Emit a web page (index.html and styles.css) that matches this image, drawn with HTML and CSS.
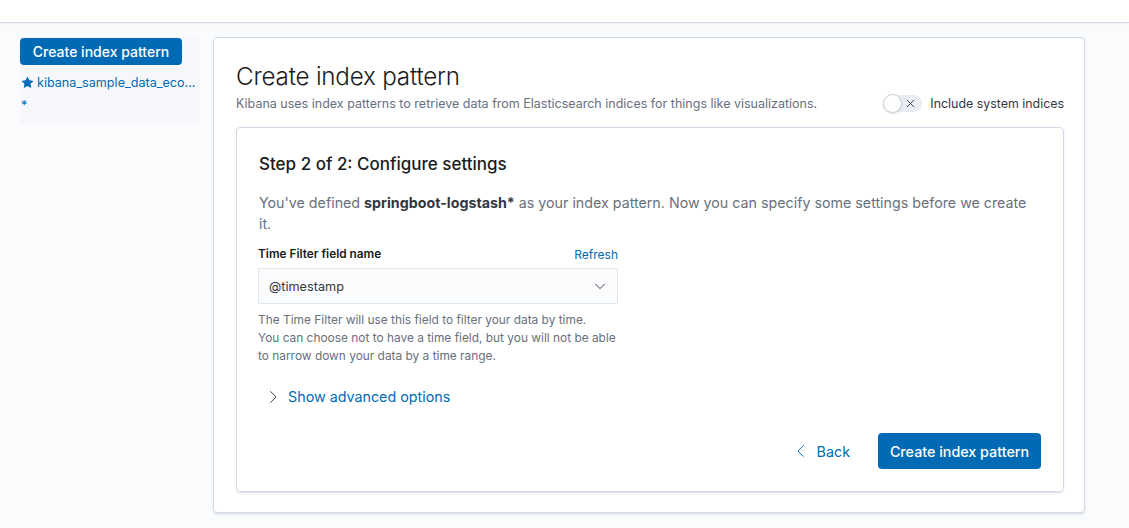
FILE: index.html
```html
<!DOCTYPE html>
<html>
<head>
<meta charset="utf-8">
<link rel="stylesheet" href="styles.css">
</head>
<body>
<header class="topbar"></header>
<div class="layout">
  <aside class="sidebar">
    <button class="btn btn-primary btn-side">Create index pattern</button>
    <ul class="pattern-list">
      <li class="pattern-item">
        <svg class="star" viewBox="0 0 16 16" width="13" height="13"><path d="M8 .6l2.3 4.7 5.1.7-3.7 3.6.9 5.1L8 12.3l-4.6 2.4.9-5.1L.6 6l5.1-.7z" fill="#006bb4"/></svg>
        <span class="pattern-link">kibana_sample_data_eco...</span>
      </li>
      <li class="pattern-item"><span class="pattern-link">*</span></li>
    </ul>
  </aside>
  <main class="panel">
    <div class="page-head">
      <div class="head-text">
        <h1 class="title">Create index pattern</h1>
        <p class="subtitle">Kibana uses index patterns to retrieve data from Elasticsearch indices for things like visualizations.</p>
      </div>
      <label class="switch">
        <span class="switch-track">
          <span class="switch-thumb"></span>
          <svg class="switch-x" viewBox="0 0 16 16" width="11" height="11"><path d="M3 3l10 10M13 3L3 13" stroke="#343741" stroke-width="1.3" fill="none"/></svg>
        </span>
        <span class="switch-label">Include system indices</span>
      </label>
    </div>
    <section class="inner">
      <h2 class="step-title">Step 2 of 2: Configure settings</h2>
      <p class="lead">You've defined <strong>springboot-logstash*</strong> as your index pattern. Now you can specify some settings before we create it.</p>
      <div class="form-row">
        <div class="form-label-row">
          <span class="form-label">Time Filter field name</span>
          <a class="link-small">Refresh</a>
        </div>
        <div class="select">
          <span>@timestamp</span>
          <svg viewBox="0 0 16 16" width="14" height="14"><path d="M2.5 5.5l5.5 5.5 5.5-5.5" stroke="#343741" stroke-width="1.1" fill="none"/></svg>
        </div>
        <p class="help">The Time Filter will use this field to filter your data by time.<br>You can choose not to have a time field, but you will not be able<br>to narrow down your data by a time range.</p>
      </div>
      <div class="advanced">
        <svg viewBox="0 0 16 16" width="14" height="14"><path d="M5 1.5l6.5 6.5-6.5 6.5" stroke="#343741" stroke-width="1.1" fill="none"/></svg>
        <span>Show advanced options</span>
      </div>
      <div class="actions">
        <a class="btn-back">
          <svg viewBox="0 0 16 16" width="14" height="14"><path d="M11 1.5L4.5 8l6.5 6.5" stroke="#006bb4" stroke-width="1.1" fill="none"/></svg>
          <span>Back</span>
        </a>
        <button class="btn btn-primary btn-create">Create index pattern</button>
      </div>
    </section>
  </main>
</div>
</body>
</html>
```

FILE: styles.css
```css
* { box-sizing: border-box; }
html, body { margin: 0; padding: 0; }
body {
  font-family: Inter, "Noto Sans", sans-serif;
  background: #fafbfd;
  color: #343741;
  height: 528px;
  overflow: hidden;
}
.topbar {
  height: 23px;
  background: #fff;
  border-bottom: 1px solid #d3dae6;
  box-shadow: 0 1px 2px rgba(0,0,0,0.05);
}
.layout {
  display: flex;
  align-items: flex-start;
  padding: 14px 20px 0 20px;
  gap: 13px;
}
.sidebar {
  width: 180px;
  background: #f5f7fa;
  padding-bottom: 6px;
}
.btn {
  font-family: inherit;
  border: none;
  border-radius: 4px;
  cursor: pointer;
}
.btn-primary {
  background: #006bb4;
  color: #fff;
  font-weight: 500;
}
.btn-side {
  display: block;
  width: 162px;
  height: 27px;
  font-size: 14px;
  padding: 0;
  margin-top: 1px;
}
.pattern-list {
  list-style: none;
  margin: 6px 0 0 0;
  padding: 0;
}
.pattern-item {
  display: flex;
  align-items: center;
  gap: 3px;
  height: 23px;
  padding-left: 1px;
}
.pattern-link {
  color: #006bb4;
  font-size: 12.6px;
}
.panel {
  width: 872px;
  height: 476px;
  background: #fff;
  border: 1px solid #d3dae6;
  border-radius: 4px;
  box-shadow: 0 2px 2px -1px rgba(152,162,179,0.3), 0 1px 5px -2px rgba(152,162,179,0.3);
  padding: 22px 20px 0 22px;
}
.page-head {
  display: flex;
  justify-content: space-between;
  align-items: flex-end;
}
.title {
  margin: 0;
  font-size: 24.2px;
  font-weight: 300;
  line-height: 33px;
  color: #1a1c21;
  letter-spacing: -0.2px;
}
.subtitle {
  margin: 0;
  padding-top: 2px;
  font-size: 12.5px;
  line-height: 18px;
  color: #69707d;
}
.switch {
  display: flex;
  align-items: center;
  gap: 8px;
  padding-bottom: 1px;
}
.switch-track {
  position: relative;
  width: 39px;
  height: 17px;
  border-radius: 9px;
  background: #e9edf3;
  display: flex;
  align-items: center;
  justify-content: flex-end;
  padding-right: 6px;
}
.switch-thumb {
  position: absolute;
  left: 0;
  top: -1px;
  width: 19px;
  height: 19px;
  border-radius: 50%;
  background: #fff;
  border: 1px solid #c9d0db;
  box-shadow: 0 1px 2px rgba(0,0,0,0.1);
}
.switch-label {
  font-size: 12.4px;
  color: #343741;
}
.inner {
  margin-top: 14px;
  height: 365px;
  border: 1px solid #d3dae6;
  border-radius: 4px;
  box-shadow: 0 2px 2px -1px rgba(152,162,179,0.3), 0 1px 5px -2px rgba(152,162,179,0.3);
  padding: 23px 22px 0 22px;
  display: flex;
  flex-direction: column;
}
.step-title {
  margin: 0;
  font-size: 17px;
  font-weight: 500;
  line-height: 26px;
  color: #1a1c21;
}
.lead {
  margin: 15px 0 0 0;
  font-size: 14.25px;
  line-height: 21px;
  color: #69707d;
}
.lead strong { color: #343741; font-weight: 700; }
.form-row {
  width: 360px;
  margin-top: 10px;
  margin-left: -1px;
}
.form-label-row {
  display: flex;
  justify-content: space-between;
  align-items: center;
  height: 20px;
}
.form-label {
  font-size: 11.8px;
  font-weight: 600;
  color: #1a1c21;
}
.link-small {
  font-size: 12px;
  color: #006bb4;
}
.select {
  margin-top: 4px;
  height: 36px;
  background: #fbfcfd;
  border: 1px solid #e1e5ec;
  display: flex;
  align-items: center;
  justify-content: space-between;
  padding: 0 10px 0 10px;
  font-size: 12.7px;
  color: #343741;
}
.help {
  margin: 7px 0 0 0;
  font-size: 11.9px;
  line-height: 18px;
  color: #69707d;
}
.advanced {
  margin-top: 23px;
  display: flex;
  align-items: center;
  gap: 8px;
  padding-left: 7px;
  color: #006bb4;
  font-size: 14.3px;
}
.actions {
  margin-top: auto;
  margin-bottom: 22px;
  display: flex;
  justify-content: flex-end;
  align-items: center;
  gap: 28px;
}
.btn-back {
  display: flex;
  align-items: center;
  gap: 9px;
  color: #006bb4;
  font-size: 14.3px;
}
.btn-create {
  width: 163px;
  height: 36px;
  font-size: 14.3px;
}
```
